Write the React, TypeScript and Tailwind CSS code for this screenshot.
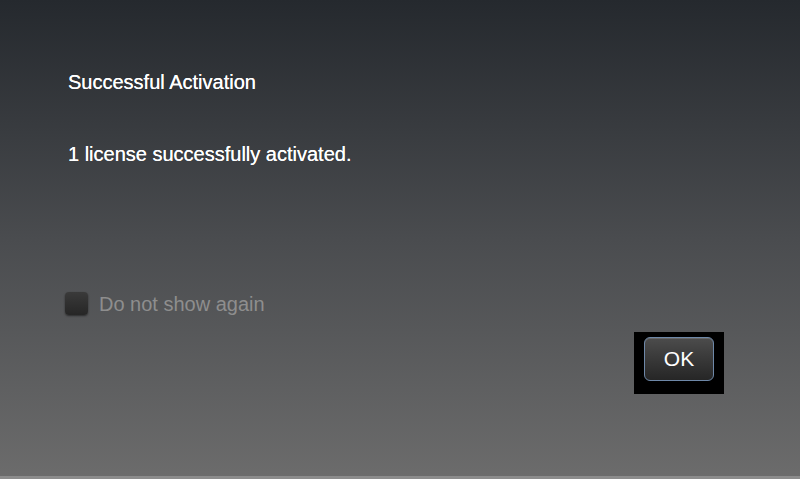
import { useState } from "react";

const App = () => {
  const [dontShow, setDontShow] = useState(false);

  return (
    <div
      className="w-[800px] h-[479px] flex flex-col bg-gradient-to-b from-[#25292e] via-[#4a4c4f] to-[#6c6c6c] text-white"
      style={{ fontFamily: '"Liberation Sans", Arial, sans-serif' }}
    >
      <div className="flex-1 flex flex-col pl-[68px] pr-[76px] pt-[71px]">
        <h1 className="text-[20px] leading-[22px] [text-shadow:0_0_0.4px_#fff]">Successful Activation</h1>
        <p className="mt-[50px] text-[20px] leading-[22px] [text-shadow:0_0_0.4px_#fff]">1 license successfully activated.</p>

        <label className="mt-[127px] -ml-[3px] flex items-center gap-[11px] cursor-pointer">
          <span
            onClick={() => setDontShow(!dontShow)}
            className="w-[23px] h-[23px] rounded-[4px] bg-gradient-to-b from-[#3a3a3a] to-[#262626] shadow-[0_1px_2px_rgba(0,0,0,0.5)] flex items-center justify-center"
          >
            {dontShow && <span className="text-[14px] text-gray-300">✓</span>}
          </span>
          <span className="text-[20px] leading-[22px] text-[#8e8e8e]">Do not show again</span>
        </label>

        <div className="flex justify-end mt-[17px]">
          <div className="w-[90px] h-[62px] bg-black flex items-start justify-center pt-[5px]">
            <button className="w-[70px] h-[44px] rounded-[6px] border border-[#6e88a8] bg-gradient-to-b from-[#4c4c4c] to-[#262626] text-[21px] text-white shadow-[inset_0_1px_0_rgba(255,255,255,0.15)]">
              OK
            </button>
          </div>
        </div>
      </div>
      <div className="h-[3px] bg-[#8c8c8c]" />
    </div>
  );
};

export default App;
